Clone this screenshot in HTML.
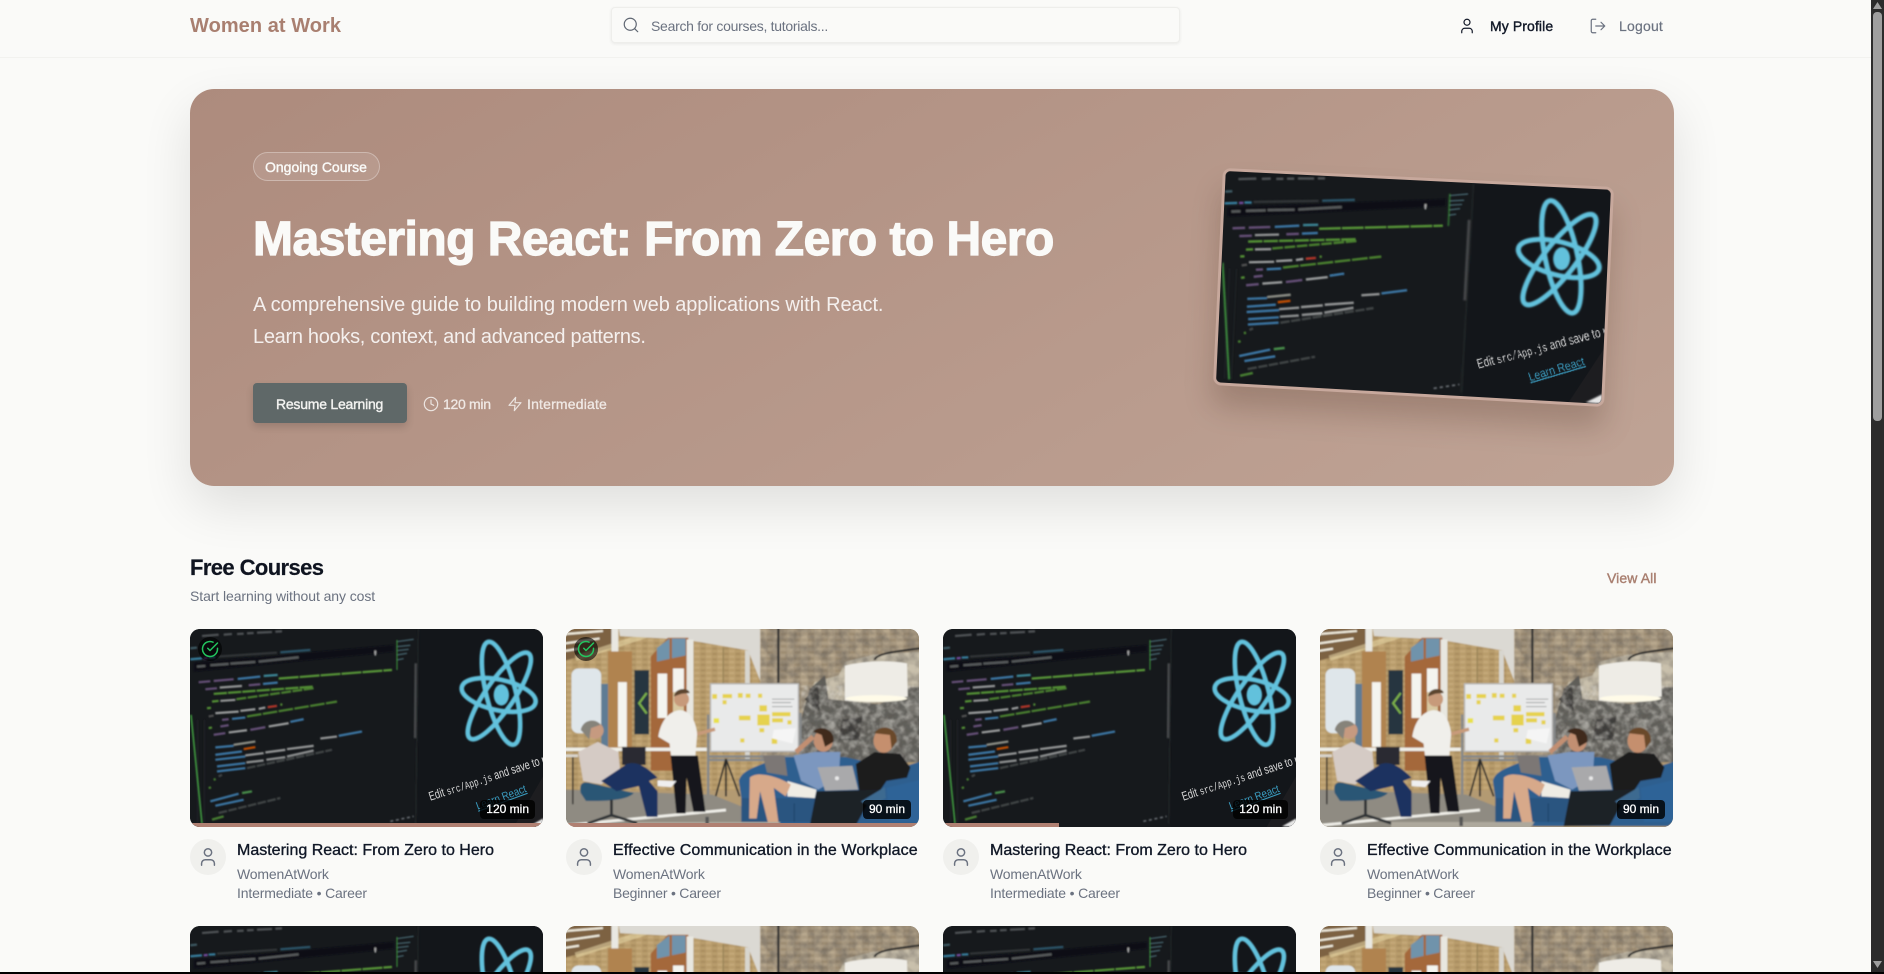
<!DOCTYPE html>
<html lang="en"><head><meta charset="utf-8"><title>Women at Work</title>
<style>
*{box-sizing:border-box;margin:0;padding:0}
html,body{width:1884px;height:974px;overflow:hidden;background:#fafaf8}
body{position:relative;font-family:"Liberation Sans",Arial,sans-serif;color:#111827}
.t{position:absolute;white-space:nowrap}
.ic{position:absolute;fill:none;stroke:currentColor;stroke-width:1.6;stroke-linecap:round;stroke-linejoin:round}
.semi{-webkit-text-stroke:.4px currentColor}
header{position:absolute;left:0;top:0;width:1884px;height:58px;border-bottom:1px solid #f2f2ef}
.search{position:absolute;left:611px;top:7px;width:569px;height:36px;border:1px solid #eeeeeb;border-radius:4px;box-shadow:0 1px 3px rgba(0,0,0,.07);background:#fafaf8}
.hero{position:absolute;left:190px;top:89px;width:1484px;height:397px;border-radius:24px;background:linear-gradient(150deg,#ad8b7d,#bfa395);box-shadow:0 20px 50px rgba(0,0,0,.11)}
.badge{position:absolute;left:253px;top:152px;width:127px;height:29px;border-radius:15px;background:rgba(255,255,255,.1);border:1px solid rgba(255,255,255,.3)}
.btn{position:absolute;left:253px;top:383px;width:154px;height:40px;border-radius:4px;background:#5f6868;box-shadow:0 4px 8px rgba(0,0,0,.14)}
.heroimg{position:absolute;left:1213px;top:168px;width:400px;height:225px;border:3px solid #c7a89c;border-radius:8px;overflow:hidden;transform-origin:0 0;transform:matrix3d(.963865,.046855,0,-.000034,-.044444,.964111,0,-.0000015,0,0,1,0,10,0,0,1);box-shadow:0 22px 30px rgba(60,30,20,.22);background:#14181c}
.heroimg svg{position:absolute;left:0;top:0;width:100%;height:100%}
.thumb{position:absolute;left:0;top:0;width:353px;height:198px;border-radius:10px;overflow:hidden;background:#14181c}
.art{position:absolute;left:0;top:0;width:353px;height:198px}
.cut{height:48px;border-radius:10px 10px 0 0}
.cut .art{height:48px}
.bar{position:absolute;left:0;bottom:0;height:4px;background:#b08072}
.dur{position:absolute;right:8px;bottom:8px;height:19px;line-height:19px;padding:0 6px;border-radius:4px;background:rgba(0,0,0,.82);color:#fff;font-size:12px;-webkit-text-stroke:.3px #fff}
.chk{position:absolute;left:8px;top:8px;width:24px;height:24px;border-radius:50%;background:rgba(0,0,0,.6)}
article{position:absolute;width:353px;height:290px}
.av{position:absolute;left:0;top:210px;width:36px;height:36px;border-radius:50%;background:#f0f0ed;color:#6b7280}
.ct{position:absolute;left:47px;top:212px;font-size:16px;line-height:20px;font-weight:400;white-space:nowrap;color:#111827;-webkit-text-stroke:.35px #111827}
.c1{position:absolute;left:47px;top:236px;font-size:14px;line-height:18px;color:#6b7280;white-space:nowrap;letter-spacing:-.18px}
.c2{position:absolute;left:47px;top:255px;font-size:14px;line-height:18px;color:#6b7280;white-space:nowrap;letter-spacing:-.16px}
.sb{position:absolute;left:1871px;top:0;width:13px;height:974px;background:#2c2c2c}
.sbt{position:absolute;left:2px;top:12px;width:9px;height:409px;background:#9f9f9f;border-radius:4px}
.blackbar{position:absolute;left:0;top:972px;width:1884px;height:2px;background:#000}
</style></head><body>

<svg width="0" height="0" style="position:absolute">
<defs>
<filter id="bl" x="-2%" y="-2%" width="104%" height="104%"><feGaussianBlur stdDeviation="2"/></filter>
<filter id="bo" x="-2%" y="-2%" width="104%" height="104%"><feGaussianBlur stdDeviation="2.4"/></filter>
<filter id="mot" x="0" y="0" width="100%" height="100%"><feTurbulence type="fractalNoise" baseFrequency=".035" numOctaves="4" seed="7"/><feColorMatrix values="0 0 0 0 .1  0 0 0 0 .09  0 0 0 0 .08  1.9 0 0 0 -.62"/></filter>
<filter id="mol" x="0" y="0" width="100%" height="100%"><feTurbulence type="fractalNoise" baseFrequency=".05" numOctaves="3" seed="21"/><feColorMatrix values="0 0 0 0 .9  0 0 0 0 .88  0 0 0 0 .82  2.2 0 0 0 -.85"/></filter>
<pattern id="brA" width="34" height="16" patternUnits="userSpaceOnUse"><rect width="34" height="16" fill="#b89c6c"/><rect width="15" height="7" fill="#c4a878"/><rect x="18" y="8" width="14" height="7" fill="#aa8e60"/></pattern>
<pattern id="brB" width="40" height="18" patternUnits="userSpaceOnUse"><rect width="40" height="18" fill="#ab9b82"/><rect width="18" height="8" fill="#b8a88e"/><rect x="20" y="9" width="18" height="8" fill="#9d8c72"/></pattern>
<symbol id="code" viewBox="29 27 1059 595" preserveAspectRatio="none">
<rect x="29" y="27" width="1059" height="595" fill="#16191c"/>
<rect x="712" y="27" width="380" height="595" fill="#13161a"/>
<path d="M1000 622L1088 470V622z" fill="#1d1d20"/>
<g filter="url(#bl)" fill="none" stroke-width="7" opacity=".9">
<path d="M40 128L640 75V95L40 155z" fill="#0e1113" stroke="none"/>
<g stroke="#55595b"><path d="M65 48L115 44M130 44L155 42M170 42L190 41M200 40L220 39M230 38L275 36M285 35L305 34"/></g>
<path d="M30 85L50 83" stroke="#43606a"/>
<path d="M30 118L65 115" stroke="#3a86a8"/><path d="M70 115L82 114" stroke="#7a4fa8"/><path d="M85 113L105 112" stroke="#3a86a8"/>
<path d="M110 110L290 98" stroke="#34393b"/><path d="M300 97L390 90" stroke="#2e5a70"/>
<path d="M50 140L75 138M90 136L145 132M150 131L225 126M235 125L355 112" stroke="#5d6062"/>
<path d="M55 187L90 184M100 183L160 178" stroke="#6d5580"/><path d="M172 177L240 170" stroke="#3f7fb0"/>
<path d="M250 168L292 165" stroke="#3f8fa0"/><path d="M295 176L635 150" stroke="#5da03a" stroke-dasharray="60 3"/>
<path d="M75 208L110 205M205 196L240 193" stroke="#6d5580"/><path d="M118 203L185 198" stroke="#9ea0a0"/><path d="M248 192L292 188" stroke="#3f7fb0"/>
<path d="M100 222L400 200" stroke="#5a9c38" stroke-dasharray="40 3"/>
<path d="M95 245L115 243" stroke="#5a9c38"/><path d="M120 243L165 240" stroke="#a0a2a2"/><path d="M168 238L400 205" stroke="#4f8a32" stroke-dasharray="30 4"/>
<path d="M80 265L92 264M300 254L306 254" stroke="#5a9c38"/>
<path d="M105 280L175 275M180 273L225 268M235 267L255 263" stroke="#a5a7a7"/><path d="M262 262L290 258" stroke="#c0392b"/>
<path d="M85 290L100 287" stroke="#555"/><path d="M125 300L145 298" stroke="#6d5580"/><path d="M155 297L195 293" stroke="#3f7fb0"/><path d="M200 290L470 245" stroke="#4f8a32" stroke-dasharray="44 4"/>
<path d="M85 325L95 323" stroke="#5a9c38"/><path d="M120 320L145 316" stroke="#6d5580"/>
<path d="M100 345L135 340M210 330L255 322" stroke="#6d5580"/><path d="M145 338L200 331M265 320L325 310" stroke="#a5a7a7"/><path d="M330 306L370 298" stroke="#3f7fb0"/>
<path d="M105 383L160 378" stroke="#3f7fb0"/><path d="M160 375L225 365" stroke="#989a90"/>
<path d="M105 405L185 395" stroke="#3f7fb0"/><path d="M190 388L225 382" stroke="#d35400"/>
<path d="M105 420L195 410" stroke="#3f7fb0"/><path d="M195 407L250 400M255 398L315 390M320 388L400 378M420 356L470 350" stroke="#a0a2a2"/><path d="M475 348L545 335" stroke="#3f7fb0"/>
<path d="M110 440L195 430" stroke="#3f7fb0"/><path d="M198 428L250 422M258 420L315 412M320 410L400 392" stroke="#999b9b"/>
<path d="M110 455L195 445" stroke="#3f7fb0"/><path d="M200 445L455 390" stroke="#44484a" stroke-dasharray="26 4"/>
<path d="M115 470L125 465" stroke="#44484a"/><path d="M100 480L106 478M85 505L92 503" stroke="#4e8a36"/>
<path d="M90 545L175 522" stroke="#3f7fb0"/><path d="M185 520L215 515" stroke="#4e9a50"/>
<path d="M105 558L190 540" stroke="#3f7fb0"/><path d="M115 580L300 535" stroke="#44484a" stroke-dasharray="26 4"/><path d="M95 600L130 590" stroke="#4e8a36"/>
<path d="M650 65L700 58M650 80L690 76M650 92L685 88M650 105L680 100M650 120L670 116" stroke="#4a6a74" stroke-width="4"/>
<path d="M585 92V107" stroke="#bbb" stroke-width="5"/>
<path d="M630 605L700 590" stroke="#70757a" stroke-width="5" stroke-dasharray="9 8"/>
<path d="M52 300V610M72 300V610" stroke="#24282a" stroke-width="3"/>
</g>
<g filter="url(#bl)" fill="none">
<path d="M32 285L65 612" stroke="#3f9a3f" stroke-width="5"/>
<path d="M714 27L706 612" stroke="#262a2c" stroke-width="3"/>
<path d="M706 130L704 355" stroke="#46494b" stroke-width="7"/>
<path d="M650 60V150" stroke="#3f9a3f" stroke-width="3"/>
<g stroke="#62c1dc" stroke-width="14">
<ellipse cx="955" cy="225" rx="113" ry="46" transform="rotate(12 955 225)"/>
<ellipse cx="957" cy="228" rx="155" ry="43" transform="rotate(-55.5 957 228)"/>
<ellipse cx="962" cy="220" rx="159" ry="44" transform="rotate(76 962 220)"/>
</g>
<ellipse cx="963" cy="225" rx="23" ry="32" fill="#62c1dc"/>
<path d="M1046 620L1090 595V622z" fill="#e6e6e6"/>
</g>
<g style="filter:blur(.6px)">
<text transform="translate(750 543) rotate(-18) scale(.95 1.3)" font-family="Liberation Sans,sans-serif" font-size="29" fill="#d8d8d8">Edit <tspan font-family="Liberation Mono,monospace" font-size="25">src/App.js</tspan> and save to reload</text>
<text transform="translate(892 570) rotate(-20) scale(1 1.15)" font-family="Liberation Sans,sans-serif" font-size="29" fill="#3a9cc0" text-decoration="underline">Learn React</text>
</g>
</symbol>
<symbol id="office" viewBox="19 27 1059 595" preserveAspectRatio="none">
<rect x="19" y="27" width="1059" height="595" fill="#b39a72"/>
<g filter="url(#bo)" transform="translate(548.5 324.5) scale(1.025) translate(-548.5 -324.5)">
<rect x="19" y="27" width="1059" height="595" fill="#b39a72"/>
<rect x="19" y="27" width="585" height="480" fill="url(#brA)"/>
<path d="M19 27H165V90L19 130z" fill="#7d6243"/>
<path d="M19 50L140 40M19 78L130 62M19 100L70 92" stroke="#f2eee0" stroke-width="6"/>
<path d="M60 120L290 45" stroke="#e9d9a8" stroke-width="16" opacity=".55"/>
<path d="M185 27H604V195L565 97L380 65L190 55z" fill="#dbd9d3"/>
<rect x="165" y="27" width="20" height="375" fill="#e9e8e2"/>
<rect x="48" y="150" width="87" height="190" rx="20" fill="#dfe6ea"/>
<rect x="135" y="195" width="20" height="190" fill="#5e7c94"/>
<rect x="155" y="100" width="70" height="285" fill="#b08350"/>
<rect x="184" y="190" width="26" height="190" fill="#f4f4ef"/>
<rect x="232" y="155" width="43" height="188" fill="#263640"/>
<path d="M268 222L246 252L268 282" stroke="#7db24a" stroke-width="6" fill="none"/>
<path d="M280 115L330 60H390V450H280z" fill="#a4683a"/>
<path d="M298 90L335 62V122L298 130zM342 62H382V112L342 120z" fill="#6f93ab"/>
<rect x="300" y="165" width="28" height="130" fill="#f4f4ef"/><rect x="345" y="150" width="32" height="70" fill="#f4f4ef"/>
<rect x="345" y="220" width="32" height="60" fill="#d8c7a0"/>
<path d="M385 65H405V440H385z" fill="#e8e7e0"/>
<path d="M405 75L560 100V400H405z" fill="url(#brA)"/>
<path d="M490 88H494V400H490z" fill="#9a8458"/>
<rect x="556" y="97" width="14" height="320" fill="#d8d6cf"/>
<rect x="600" y="27" width="478" height="395" fill="url(#brB)"/>
<path d="M720 270L760 190L830 170L850 130L930 110L1078 100V205L950 250L820 260L760 290z" fill="#c9c0ac"/>
<path d="M720 300L745 210L790 170L800 240L950 255L1040 205H1078V425H720z" fill="#62615c"/>
<path d="M790 320L815 305L835 335L800 350zM950 295L985 300L990 330L950 325zM1020 255L1075 250V290L1035 285z" fill="#83827c"/>
<path d="M730 240L770 200L775 280zM840 300L900 290L890 360L830 360z" fill="#3a3937"/>
<rect x="604" y="27" width="474" height="395" filter="url(#mot)" opacity=".55"/>
<rect x="720" y="200" width="358" height="225" filter="url(#mol)" opacity=".5"/>
<rect x="650" y="27" width="7" height="165" fill="#333"/>
<path d="M935 125C940 105 1000 100 1075 90" stroke="#2a2a2a" stroke-width="6" fill="none"/>
<path d="M848 142Q938 120 1030 135L1032 232Q938 252 848 244z" fill="#eeece6"/>
<ellipse cx="940" cy="238" rx="90" ry="10" fill="#fffbe8"/>
<path d="M448 285V560M718 280V400M450 408H712M450 418H700" stroke="#85888a" stroke-width="7" fill="none"/>
<path d="M500 415L470 525M500 415L540 525M500 415V525" stroke="#2a2a2a" stroke-width="5" fill="none"/>
<rect x="455" y="195" width="257" height="198" fill="#e9eaea" stroke="#b8b8b8" stroke-width="4"/>
<g fill="#e6d24d"><rect x="460" y="225" width="14" height="14"/><rect x="490" y="225" width="28" height="12"/><rect x="490" y="243" width="12" height="12"/><rect x="535" y="222" width="14" height="14"/><rect x="558" y="224" width="14" height="12"/><rect x="594" y="224" width="12" height="12"/><rect x="598" y="258" width="22" height="18"/><rect x="592" y="285" width="36" height="32"/><rect x="538" y="288" width="34" height="14"/><rect x="635" y="278" width="54" height="12"/><rect x="635" y="296" width="32" height="12"/><rect x="680" y="302" width="12" height="12"/><rect x="598" y="325" width="14" height="12"/><rect x="542" y="355" width="12" height="12"/><rect x="634" y="355" width="16" height="16"/></g>
<rect x="464" y="296" width="16" height="14" fill="#e9e14a"/>
<path d="M640 330L705 325L695 370L635 355z" fill="#f5f5f5"/>
<path d="M635 240H700M635 250H690M635 262H695" stroke="#777" stroke-width="2"/>
<path d="M19 505L460 520L560 560V622H19z" fill="#8f8b82"/>
<path d="M30 610L500 565" stroke="#f0efe9" stroke-width="8"/>
<rect x="19" y="382" width="425" height="10" fill="#efefe9"/><rect x="19" y="402" width="48" height="8" fill="#d9d6cf"/><path d="M52 410V548" stroke="#222" stroke-width="4"/>
<path d="M302 350C310 300 335 275 365 272C395 274 410 300 416 340L410 412H340L335 370z" fill="#f0efeb"/>
<path d="M338 405H418L440 570H405L385 470L382 575H355z" fill="#15191f"/>
<circle cx="370" cy="240" r="22" fill="#c79a7a"/><path d="M348 232C350 205 392 205 394 222L370 224z" fill="#5b452f"/>
<path d="M416 342L468 328" stroke="#c79a7a" stroke-width="10"/>
<path d="M75 515C70 490 78 480 100 485L230 515C215 535 150 540 90 538z" fill="#2b5675"/>
<path d="M165 535V585M95 605L165 580L245 605" stroke="#2f3336" stroke-width="8" fill="none"/>
<path d="M68 395L125 365L185 395L190 445L135 490L82 480z" fill="#d5cbc5"/>
<circle cx="118" cy="332" r="24" fill="#c69a80"/><path d="M75 330C82 298 120 295 133 315L105 325L100 358z" fill="#86837a"/>
<path d="M196 380H265V433H196z" fill="#2b2b30"/>
<path d="M135 480L210 430C240 420 270 440 300 470L275 480L300 510V585H268L245 495L180 510z" fill="#1b3260"/>
<path d="M300 478L355 480L340 498L300 495z" fill="#efefef"/>
<path d="M538 480C545 450 580 440 660 410L850 410L895 420L1030 435L1078 420V595L1050 612H560L545 530z" fill="#2e5f8f"/>
<path d="M545 530H760V600H545z" fill="#2b5580"/><path d="M640 545V600M700 545V600" stroke="#1e4468" stroke-width="3"/>
<path d="M970 500L1075 475V600L980 600z" fill="#2f6497"/>
<path d="M698 405L760 395L835 395L830 470L770 505L720 480z" fill="#7c97bf"/>
<ellipse cx="785" cy="362" rx="28" ry="32" fill="#c28f72"/><path d="M755 335C775 315 820 325 815 365L790 380L780 345z" fill="#3f2c1e"/>
<path d="M705 395L755 350" stroke="#c28f72" stroke-width="14"/>
<path d="M608 405H672L680 465L620 455z" fill="#7b7775"/>
<path d="M680 480L765 505L760 530L680 525z" fill="#efece4"/>
<path d="M570 470C590 450 650 465 690 490L675 525L640 500L655 610H625L600 510L590 590H568z" fill="#d7a98a"/>
<path d="M880 430L935 395L1010 400L1040 440L1030 470L970 480L950 510H890z" fill="#1b1b1f"/>
<ellipse cx="962" cy="362" rx="30" ry="35" fill="#c58f6e"/><path d="M935 340C950 310 1005 320 1000 365L985 385L980 345z" fill="#6b4a2c"/>
<path d="M745 612L765 510L960 505L930 520L880 610z" fill="#1d2128"/>
<path d="M895 540L965 498L968 530L920 555z" fill="#3d6a90"/>
<path d="M768 440L870 435L887 505L790 508z" fill="#a9a9ab"/><circle cx="825" cy="472" r="6" fill="#e8e8e8"/>
<path d="M240 600H660L640 625H240z" fill="#ada89c"/><path d="M445 585V612" stroke="#555" stroke-width="10"/>
</g>
</symbol>
</defs></svg>

<header>
<div class="t" style="left:190px;top:14px;font-size:20px;line-height:24px;font-weight:700;letter-spacing:.05px;color:#a97f70">Women at Work</div>
<div class="search"></div>
<svg class="ic" style="left:622px;top:16px;color:#5f6672" width="18" height="18" viewBox="0 0 24 24"><circle cx="11" cy="11" r="8"/><path d="m21 21-4.3-4.3"/></svg>
<div class="t" style="left:651px;top:17px;font-size:14px;line-height:18px;color:#6b7280;letter-spacing:-.28px">Search for courses, tutorials...</div>
<svg class="ic" style="left:1458px;top:17px;color:#111827" width="18" height="18" viewBox="0 0 24 24"><path d="M19 21v-2a4 4 0 0 0-4-4H9a4 4 0 0 0-4 4v2"/><circle cx="12" cy="7" r="4"/></svg>
<div class="t semi" style="left:1490px;top:17px;font-size:14px;line-height:18px;letter-spacing:.1px;color:#111827">My Profile</div>
<svg class="ic" style="left:1589px;top:17px;color:#6b7280" width="18" height="18" viewBox="0 0 24 24"><path d="M9 21H5a2 2 0 0 1-2-2V5a2 2 0 0 1 2-2h4"/><path d="M16 17l5-5-5-5M21 12H9"/></svg>
<div class="t" style="left:1619px;top:17px;font-size:14px;line-height:18px;color:#6b7280;letter-spacing:.2px;-webkit-text-stroke:.2px #6b7280">Logout</div>
</header>

<main>
<section>
<div class="hero"></div>
<div class="badge"></div>
<div class="t semi" style="left:265px;top:158px;font-size:14px;line-height:18px;color:#fafaf8">Ongoing Course</div>
<h1 class="t" style="left:253px;top:212px;font-size:48px;line-height:56px;font-weight:700;letter-spacing:-.53px;color:#fafaf8;-webkit-text-stroke:1.2px #fafaf8">Mastering React: From Zero to Hero</h1>
<div class="t" style="left:253px;top:289px;font-size:20px;line-height:32px;color:rgba(255,255,255,.86);letter-spacing:-.08px">A comprehensive guide to building modern web applications with React.<br><span style="letter-spacing:-.3px">Learn hooks, context, and advanced patterns.</span></div>
<div class="btn"></div>
<div class="t semi" style="left:276px;top:395px;font-size:14px;line-height:18px;color:#f3f3f1;letter-spacing:-.23px">Resume Learning</div>
<svg class="ic" style="left:423px;top:396px;color:#ece5e1;stroke-width:1.8" width="16" height="16" viewBox="0 0 24 24"><circle cx="12" cy="12" r="10"/><path d="M12 6v6l4 2"/></svg>
<div class="t" style="left:443px;top:395px;font-size:14px;line-height:18px;color:#f0e9e5;letter-spacing:-.3px;-webkit-text-stroke:.3px #f0e9e5">120 min</div>
<svg class="ic" style="left:507px;top:396px;color:#ece5e1;stroke-width:1.8" width="16" height="16" viewBox="0 0 24 24"><path d="M13 2 3 14h9l-1 8 10-12h-9l1-8z"/></svg>
<div class="t" style="left:527px;top:395px;font-size:14px;line-height:18px;color:#f0e9e5;letter-spacing:.18px;-webkit-text-stroke:.3px #f0e9e5">Intermediate</div>
<div class="heroimg"><svg viewBox="0 0 400 225" preserveAspectRatio="none"><use href="#code" width="400" height="225"/></svg></div>
</section>

<section>
<h2 class="t" style="left:190px;top:554px;font-size:22px;line-height:28px;font-weight:700;letter-spacing:-.6px;color:#0f1420;-webkit-text-stroke:.2px #0f1420">Free Courses</h2>
<div class="t" style="left:190px;top:587px;font-size:14px;line-height:18px;color:#6b7280;letter-spacing:-.08px">Start learning without any cost</div>
<div class="t semi" style="left:1607px;top:569px;font-size:14px;line-height:18px;letter-spacing:.1px;color:#a97f70">View All</div>

<article style="left:190px;top:629px">
<div class="thumb"><svg class="art" viewBox="0 0 353 198" preserveAspectRatio="none"><use href="#code" width="353" height="198"/></svg><div class="bar" style="width:100%"></div><div class="chk"><svg class="ic" style="left:3px;top:3px;color:#22c55e;stroke-width:2" width="18" height="18" viewBox="0 0 24 24"><path d="M22 11.08V12a10 10 0 1 1-5.93-9.14"/><path d="M22 4 12 14.01l-3-3"/></svg></div><div class="dur">120 min</div></div>
<div class="av"><svg class="ic" style="left:7px;top:7px" width="22" height="22" viewBox="0 0 24 24"><path d="M19 21v-2a4 4 0 0 0-4-4H9a4 4 0 0 0-4 4v2"/><circle cx="12" cy="7" r="4"/></svg></div>
<h3 class="ct">Mastering React: From Zero to Hero</h3><div class="c1">WomenAtWork</div><div class="c2">Intermediate • Career</div>
</article>
<article style="left:566px;top:629px">
<div class="thumb"><svg class="art" viewBox="0 0 353 198" preserveAspectRatio="none"><use href="#office" width="353" height="198"/></svg><div class="bar" style="width:100%"></div><div class="chk"><svg class="ic" style="left:3px;top:3px;color:#22c55e;stroke-width:2" width="18" height="18" viewBox="0 0 24 24"><path d="M22 11.08V12a10 10 0 1 1-5.93-9.14"/><path d="M22 4 12 14.01l-3-3"/></svg></div><div class="dur">90 min</div></div>
<div class="av"><svg class="ic" style="left:7px;top:7px" width="22" height="22" viewBox="0 0 24 24"><path d="M19 21v-2a4 4 0 0 0-4-4H9a4 4 0 0 0-4 4v2"/><circle cx="12" cy="7" r="4"/></svg></div>
<h3 class="ct" style="letter-spacing:.12px">Effective Communication in the Workplace</h3><div class="c1">WomenAtWork</div><div class="c2" style="letter-spacing:-.22px">Beginner • Career</div>
</article>
<article style="left:943px;top:629px">
<div class="thumb"><svg class="art" viewBox="0 0 353 198" preserveAspectRatio="none"><use href="#code" width="353" height="198"/></svg><div class="bar" style="width:33%"></div><div class="dur">120 min</div></div>
<div class="av"><svg class="ic" style="left:7px;top:7px" width="22" height="22" viewBox="0 0 24 24"><path d="M19 21v-2a4 4 0 0 0-4-4H9a4 4 0 0 0-4 4v2"/><circle cx="12" cy="7" r="4"/></svg></div>
<h3 class="ct">Mastering React: From Zero to Hero</h3><div class="c1">WomenAtWork</div><div class="c2">Intermediate • Career</div>
</article>
<article style="left:1320px;top:629px">
<div class="thumb"><svg class="art" viewBox="0 0 353 198" preserveAspectRatio="none"><use href="#office" width="353" height="198"/></svg><div class="dur">90 min</div></div>
<div class="av"><svg class="ic" style="left:7px;top:7px" width="22" height="22" viewBox="0 0 24 24"><path d="M19 21v-2a4 4 0 0 0-4-4H9a4 4 0 0 0-4 4v2"/><circle cx="12" cy="7" r="4"/></svg></div>
<h3 class="ct" style="letter-spacing:.12px">Effective Communication in the Workplace</h3><div class="c1">WomenAtWork</div><div class="c2" style="letter-spacing:-.22px">Beginner • Career</div>
</article>
<article style="left:190px;top:926px;height:48px;overflow:hidden"><div class="thumb cut"><svg class="art" viewBox="0 0 353 48" preserveAspectRatio="xMinYMin slice"><use href="#code" width="353" height="198"/></svg></div></article>
<article style="left:566px;top:926px;height:48px;overflow:hidden"><div class="thumb cut"><svg class="art" viewBox="0 0 353 48" preserveAspectRatio="xMinYMin slice"><use href="#office" width="353" height="198"/></svg></div></article>
<article style="left:943px;top:926px;height:48px;overflow:hidden"><div class="thumb cut"><svg class="art" viewBox="0 0 353 48" preserveAspectRatio="xMinYMin slice"><use href="#code" width="353" height="198"/></svg></div></article>
<article style="left:1320px;top:926px;height:48px;overflow:hidden"><div class="thumb cut"><svg class="art" viewBox="0 0 353 48" preserveAspectRatio="xMinYMin slice"><use href="#office" width="353" height="198"/></svg></div></article>
</section>
</main>

<div class="sb"><div class="sbt"></div>
<svg style="position:absolute;left:2px;top:2px" width="9" height="7"><path d="M4.5 0L9 7H0z" fill="#9f9f9f"/></svg>
<svg style="position:absolute;left:2px;top:961px" width="9" height="7"><path d="M0 0H9L4.5 7z" fill="#9f9f9f"/></svg>
</div>
<div class="blackbar"></div>
</body></html>
